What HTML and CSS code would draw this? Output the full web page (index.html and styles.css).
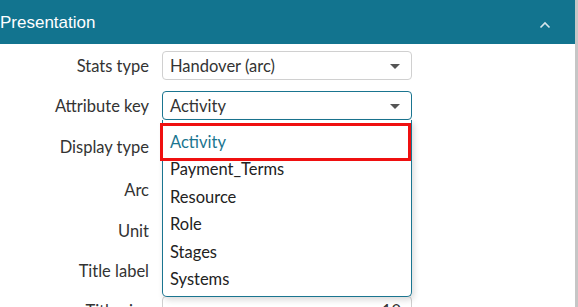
FILE: index.html
```html
<!DOCTYPE html>
<html lang="en">
<head>
  <meta charset="UTF-8" />
  <title>Presentation</title>
  <link rel="stylesheet" href="styles.css">
</head>
<body>

  <div class="panel">
    <div class="panel-head">
      <span class="panel-title">Presentation</span>
      <svg class="chevron" width="12" height="8" viewBox="0 0 12 8">
        <path d="M1.5 6.5 L6 2 L10.5 6.5" fill="none" stroke="#d6e6ec" stroke-width="1.6" />
      </svg>
    </div>

    <div class="form">
      <div class="row">
        <label>Stats type</label>
        <div class="select">Handover (arc)<span class="caret"></span></div>
      </div>

      <div class="row">
        <label>Attribute key</label>
        <div class="select open">Activity<span class="caret"></span></div>
        <ul class="menu">
          <li class="active">Activity</li>
          <li>Payment_Terms</li>
          <li>Resource</li>
          <li>Role</li>
          <li>Stages</li>
          <li>Systems</li>
        </ul>
        <div class="mark"></div>
      </div>

      <div class="row tall">
        <label>Display type</label>
        <div class="select"></div>
      </div>

      <div class="row tall2">
        <label>Arc</label>
        <div class="select"></div>
      </div>

      <div class="row">
        <label>Unit</label>
        <div class="select"></div>
      </div>

      <div class="row">
        <label>Title label</label>
        <div class="select"></div>
      </div>

      <div class="row">
        <label>Title size</label>
        <div class="select number">10</div>
      </div>
    </div>
  </div>

  <div class="scrollbar"></div>

</body>
</html>
```

FILE: styles.css
```css
html, body {
  margin: 0;
  padding: 0;
  overflow: hidden;
}

body {
  display: flex;
  height: 307px;
  background: #fff;
  font-family: Lato, "Noto Sans", sans-serif;
  color: #333;
}

.panel {
  width: 575px;
  flex: none;
}

.scrollbar {
  flex: 1;
  background: #c6c6c6;
}

.panel-head {
  height: 44px;
  background: #12748f;
  display: flex;
  align-items: center;
  justify-content: space-between;
  padding: 0 24px 0 0;
}

.panel-title {
  font-family: "Liberation Sans", Arial, sans-serif;
  font-size: 17px;
  color: #fff;
  margin-top: 2px;
}

.chevron {
  margin-top: 6px;
}

.form {
  padding-top: 1px;
}

.row {
  position: relative;
  display: grid;
  grid-template-columns: 149px 250px;
  column-gap: 13px;
  align-items: center;
  height: 40px;
}

.row.tall {
  height: 43px;
}

.row.tall2 {
  height: 42px;
}

.row label {
  text-align: right;
  font-size: 16.5px;
  color: #333;
  padding-top: 1px;
}

.select {
  position: relative;
  height: 29px;
  box-sizing: border-box;
  border: 1px solid #d0d0d0;
  border-radius: 4px;
  padding: 1px 0 0 7px;
  line-height: 27px;
  font-size: 16.5px;
  color: #333;
}

.select.open {
  border-color: #1a7590;
}

.select.number {
  text-align: right;
  padding-right: 10px;
}

.caret {
  position: absolute;
  right: 11px;
  top: 12px;
  width: 0;
  height: 0;
  border-left: 5px solid transparent;
  border-right: 5px solid transparent;
  border-top: 5px solid #555;
}

.menu {
  position: absolute;
  z-index: 2;
  left: 162px;
  top: 35px;
  width: 250px;
  box-sizing: border-box;
  margin: 0;
  padding: 8.5px 0 2.5px;
  list-style: none;
  background: #fff;
  border: 1px solid #1a7590;
  border-top: none;
  border-radius: 0 0 5px 5px;
  box-shadow: 2px 3px 6px rgba(0, 0, 0, 0.15);
}

.menu li {
  height: 27.5px;
  line-height: 27.5px;
  padding-left: 7px;
  font-size: 16.5px;
  color: #222;
}

.menu li.active {
  color: #1a7590;
}

.mark {
  position: absolute;
  z-index: 3;
  left: 160px;
  top: 38px;
  width: 251px;
  height: 38px;
  box-sizing: border-box;
  border: 3px solid #ef1010;
}
```
